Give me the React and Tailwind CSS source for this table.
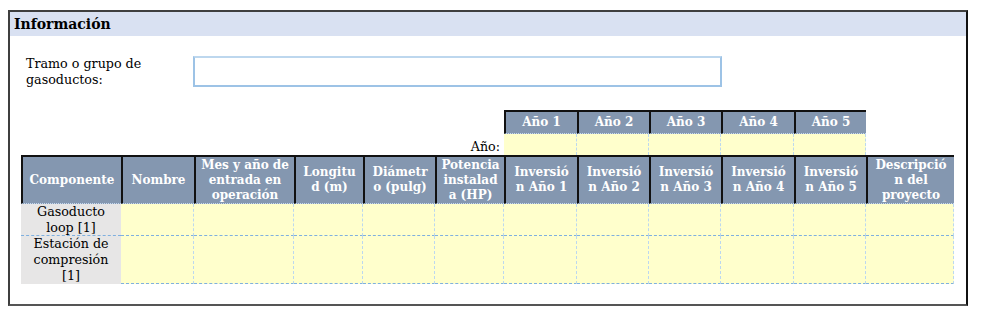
const cols = "grid-cols-[100px_73px_100px_69px_72px_69px_73px_72px_72px_73px_72px_88px]"

const headCell =
  "bg-[#8497b0] text-white font-bold text-[12px] leading-[15px] text-center flex items-center justify-center whitespace-nowrap border-l-2 border-t-2 border-l-[#111] border-t-[#111] border-b border-b-[#c5d9f1] [border-bottom-style:dotted]"

const yellow =
  "bg-[#ffffcc] border-r border-b border-r-[#bcd8ef] border-b-[#7fb0df] [border-right-style:dashed] [border-bottom-style:dashed]"

const headers = [
  ["Componente"],
  ["Nombre"],
  ["Mes y año de", "entrada en", "operación"],
  ["Longitu", "d (m)"],
  ["Diámetr", "o (pulg)"],
  ["Potencia", "instalad", "a (HP)"],
  ["Inversió", "n Año 1"],
  ["Inversió", "n Año 2"],
  ["Inversió", "n Año 3"],
  ["Inversió", "n Año 4"],
  ["Inversió", "n Año 5"],
  ["Descripció", "n del", "proyecto"],
]

const rows = [
  { h: "Gasoducto\nloop [1]" },
  { h: "Estación de\ncompresión\n[1]" },
]

function Lines({ lines }) {
  return (
    <span>
      {lines.map((l, i) => (
        <span key={i} className="block">{l}</span>
      ))}
    </span>
  )
}

export default function App() {
  return (
    <div className="w-[983px] h-[319px] bg-white pt-[10px] pl-[8px] font-['DejaVu_Serif',serif] text-black">
      <div className="w-[960px] h-[296px] border-2 border-[#3f3f3f] border-r-[#111] border-b-[#555]">

        <div className="h-[24px] bg-[#d9e1f2] pl-[4px] text-[14px] font-bold leading-[24px]">
          Información
        </div>

        <div className="flex mt-[20px]">
          <div className="w-[183px] pl-[16px] text-[12.7px] leading-[16px]">
            Tramo o grupo de<br />gasoductos:
          </div>
          <div className="w-[529px] h-[31px] border-2 border-[#9dc3e6] border-t-[#bdd7ee] bg-white" />
        </div>

        <div className={`grid ${cols} grid-rows-[24px_21px_49px_32px_48px] ml-[11px] mt-[22px]`}>
          {/* año header row */}
          <div className="col-span-6" />
          {[1, 2, 3, 4, 5].map((n) => (
            <div key={n} className={headCell}>Año {n}</div>
          ))}
          <div />

          {/* año values row */}
          <div className="col-span-6 flex items-end justify-end pr-[4px] text-[12.7px] leading-[16px]">
            Año:
          </div>
          {[1, 2, 3, 4, 5].map((n) => (
            <div key={n} className="bg-[#ffffcc] border-r border-r-[#bcd8ef] [border-right-style:dashed]" />
          ))}
          <div />

          {/* main header */}
          {headers.map((h, i) => (
            <div key={i} className={headCell}>
              <Lines lines={h} />
            </div>
          ))}

          {/* body rows */}
          {rows.map((r, ri) => (
            <>
              <div
                key={"h" + ri}
                className={`bg-[#e7e6e6] text-[12.7px] leading-[16px] text-center whitespace-pre-line ${ri === 0 ? "border-b border-b-[#7fb0df] [border-bottom-style:dashed]" : ""}`}
              >
                {r.h}
              </div>
              {Array.from({ length: 11 }).map((_, ci) => (
                <div key={ri + "-" + ci} className={yellow} />
              ))}
            </>
          ))}
        </div>

      </div>
    </div>
  )
}
